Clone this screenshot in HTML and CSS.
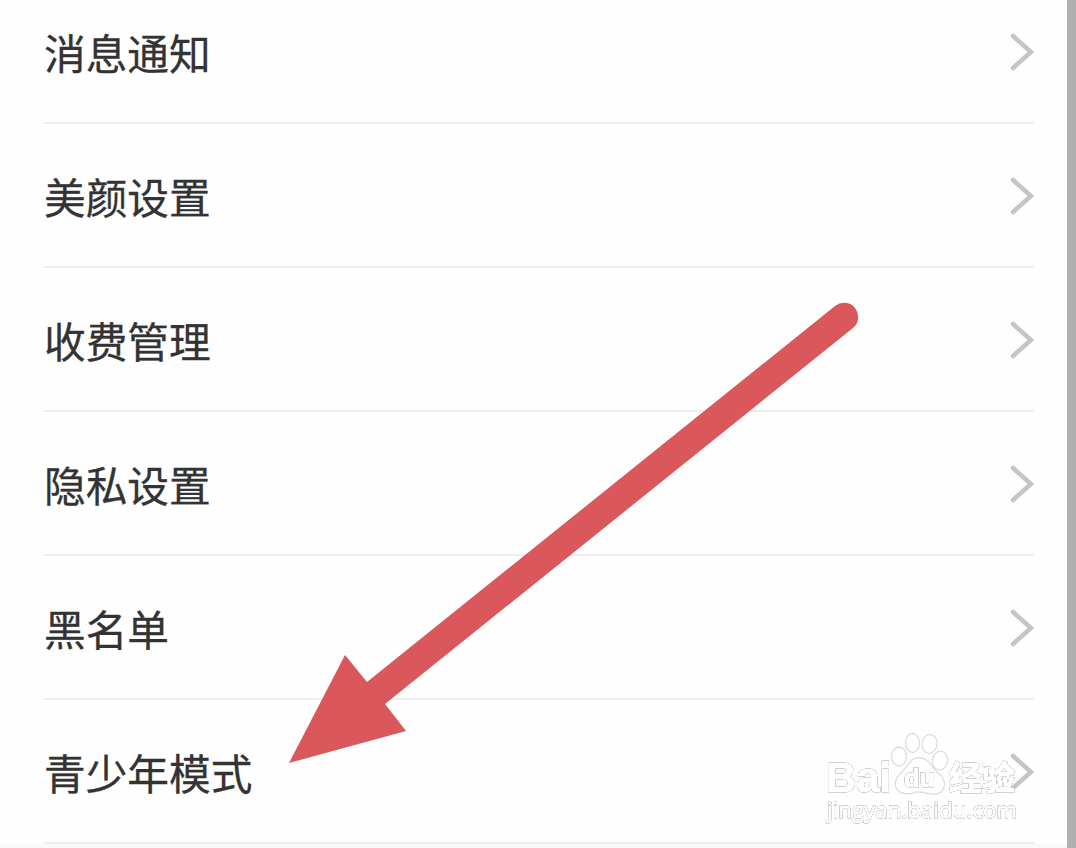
FILE: index.html
```
<!DOCTYPE html>
<html lang="zh-CN">
<head>
    <meta charset="UTF-8">
    <title>设置</title>
    <link rel="stylesheet" href="styles.css">
</head>
<body>
    <div class="screen">
        <ul class="settings">
            <li><span>消息通知</span><svg class="chevron" viewBox="0 0 24 38"><path d="M3 3 L21 19 L3 35"/></svg></li>
            <li><span>美颜设置</span><svg class="chevron" viewBox="0 0 24 38"><path d="M3 3 L21 19 L3 35"/></svg></li>
            <li><span>收费管理</span><svg class="chevron" viewBox="0 0 24 38"><path d="M3 3 L21 19 L3 35"/></svg></li>
            <li><span>隐私设置</span><svg class="chevron" viewBox="0 0 24 38"><path d="M3 3 L21 19 L3 35"/></svg></li>
            <li><span>黑名单</span><svg class="chevron" viewBox="0 0 24 38"><path d="M3 3 L21 19 L3 35"/></svg></li>
            <li><span>青少年模式</span><svg class="chevron" viewBox="0 0 24 38"><path d="M3 3 L21 19 L3 35"/></svg></li>
        </ul>
    </div>

    <svg class="arrow" viewBox="0 0 1076 848">
        <path d="M289 763 L345 655 L367 682 L835 306 A14 14 0 0 1 853 328 L385 704 L406 731 Z"/>
    </svg>

    <svg class="watermark" viewBox="0 0 210 100">
        <text class="brand" x="6" y="60" textLength="65" lengthAdjust="spacingAndGlyphs">Bai</text>
        <ellipse cx="79" cy="24.500" rx="7.500" ry="9.500"/>
        <ellipse cx="92.500" cy="11" rx="7" ry="9.500"/>
        <ellipse cx="109.500" cy="12" rx="7.500" ry="9.500" transform="rotate(8 109.500 12)"/>
        <ellipse cx="120" cy="28.500" rx="7.500" ry="9.500" transform="rotate(8 120 28.500)"/>
        <path d="M99 25.500 C108 25.500 111 34 117 40 C128 48 126 60 116 62 C110 63 105 60 99 60 C93 60 90 63 84 61.500 C73 59 73 48 81 41 C88 35 90 25.500 99 25.500 Z"/>
        <text class="du" x="84" y="55" textLength="31" lengthAdjust="spacingAndGlyphs">du</text>
        <text class="cn" x="129" y="58" textLength="66" lengthAdjust="spacingAndGlyphs">经验</text>
        <text class="site" x="7" y="86" textLength="190" lengthAdjust="spacingAndGlyphs">jingyan.baidu.com</text>
    </svg>
</body>
</html>
```
FILE: styles.css
```
body {
    margin: 0;
    height: 848px;
    overflow: hidden;
    position: relative;
    background: #b0b0b0;
    font-family: "Noto Sans CJK SC", sans-serif;
}

.screen {
    width: 1067px;
    height: 848px;
    overflow: hidden;
    background: #f9f9f9;
}

/* the list is scrolled, so the first row is cut at the top */
.settings {
    list-style: none;
    margin: -20px 0 0;
    padding: 0 33px 0 44px;
    background: #fefefe;
}

.settings li {
    display: flex;
    align-items: center;
    justify-content: space-between;
    box-sizing: border-box;
    height: 144px;
    padding-top: 2px;
    border-bottom: 2px solid #eee;
    color: #333;
    font-size: 41.7px;
    line-height: 60px;
    -webkit-text-stroke: 0.3px #333;
}

.chevron {
    width: 24px;
    height: 38px;
    fill: none;
    stroke: #c4c4c4;
    stroke-width: 4.5;
    stroke-linecap: round;
}

.arrow {
    position: absolute;
    left: 0;
    top: 0;
    width: 1076px;
    height: 848px;
    fill: #da575c;
}

.watermark {
    position: absolute;
    left: 820px;
    top: 732px;
    width: 210px;
    height: 100px;
    fill: #fff;
    stroke: #ddd;
    stroke-width: 1.3;
}

/* white letters with a thin grey rim */
.watermark text {
    stroke: #fff;
    stroke-width: 1.2;
    font-family: "Liberation Sans", sans-serif;
    font-weight: bold;
    filter: drop-shadow(0 0 0.6px #888) drop-shadow(0 0 0.6px #aaa);
}

.watermark .brand {
    font-size: 43px;
}

.watermark .du {
    font-size: 26px;
}

.watermark .cn {
    font-family: "Noto Sans CJK SC", sans-serif;
    font-size: 33px;
}

.watermark .site {
    font-family: "Open Sans", sans-serif;
    font-size: 21px;
    font-weight: normal;
    stroke-width: 0.8;
}
```
